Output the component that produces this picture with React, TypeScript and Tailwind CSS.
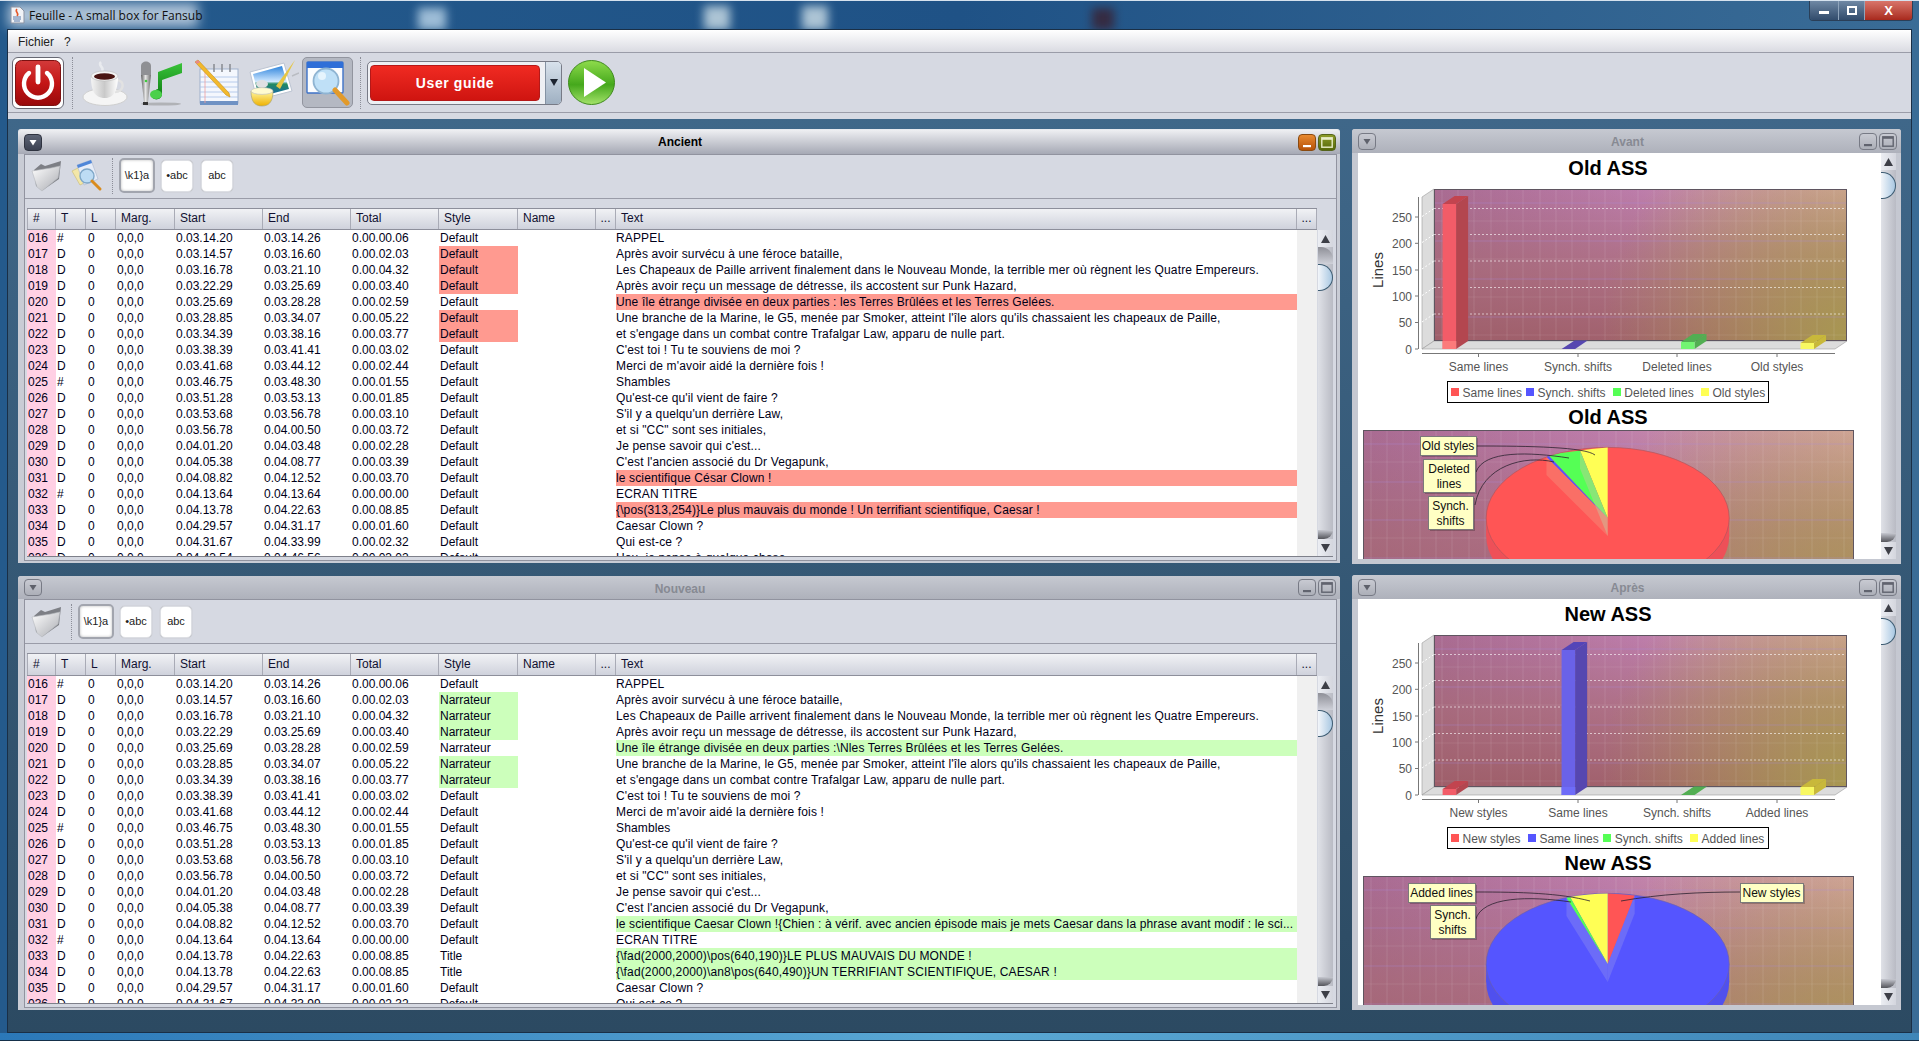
import React from "react";

type Row = { n: string; t: string; s: string; e: string; d: string; st: string; tx: string; hs?: boolean; ht?: boolean };
const r = (n: string, t: string, s: string, e: string, d: string, st: string, tx: string, hs = false, ht = false): Row => ({ n, t, s, e, d, st, tx, hs, ht });

const shared1 = (st: string, t20: string): Row[] => [
  r("016", "#", "0.03.14.20", "0.03.14.26", "0.00.00.06", "Default", "RAPPEL"),
  r("017", "D", "0.03.14.57", "0.03.16.60", "0.00.02.03", st, "Après avoir survécu à une féroce bataille,", true),
  r("018", "D", "0.03.16.78", "0.03.21.10", "0.00.04.32", st, "Les Chapeaux de Paille arrivent finalement dans le Nouveau Monde, la terrible mer où règnent les Quatre Empereurs.", true),
  r("019", "D", "0.03.22.29", "0.03.25.69", "0.00.03.40", st, "Après avoir reçu un message de détresse, ils accostent sur Punk Hazard,", true),
  r("020", "D", "0.03.25.69", "0.03.28.28", "0.00.02.59", st, t20, false, true),
  r("021", "D", "0.03.28.85", "0.03.34.07", "0.00.05.22", st, "Une branche de la Marine, le G5, menée par Smoker, atteint l'île alors qu'ils chassaient les chapeaux de Paille,", true),
  r("022", "D", "0.03.34.39", "0.03.38.16", "0.00.03.77", st, "et s'engage dans un combat contre Trafalgar Law, apparu de nulle part.", true),
  r("023", "D", "0.03.38.39", "0.03.41.41", "0.00.03.02", "Default", "C'est toi ! Tu te souviens de moi ?"),
  r("024", "D", "0.03.41.68", "0.03.44.12", "0.00.02.44", "Default", "Merci de m'avoir aidé la dernière fois !"),
  r("025", "#", "0.03.46.75", "0.03.48.30", "0.00.01.55", "Default", "Shambles"),
  r("026", "D", "0.03.51.28", "0.03.53.13", "0.00.01.85", "Default", "Qu'est-ce qu'il vient de faire ?"),
  r("027", "D", "0.03.53.68", "0.03.56.78", "0.00.03.10", "Default", "S'il y a quelqu'un derrière Law,"),
  r("028", "D", "0.03.56.78", "0.04.00.50", "0.00.03.72", "Default", "et si \"CC\" sont ses initiales,"),
  r("029", "D", "0.04.01.20", "0.04.03.48", "0.00.02.28", "Default", "Je pense savoir qui c'est..."),
  r("030", "D", "0.04.05.38", "0.04.08.77", "0.00.03.39", "Default", "C'est l'ancien associé du Dr Vegapunk,"),
];

const oldRows: Row[] = [
  ...shared1("Default", "Une île étrange divisée en deux parties : les Terres Brûlées et les Terres Gelées."),
  r("031", "D", "0.04.08.82", "0.04.12.52", "0.00.03.70", "Default", "le scientifique César Clown !", false, true),
  r("032", "#", "0.04.13.64", "0.04.13.64", "0.00.00.00", "Default", "ECRAN TITRE"),
  r("033", "D", "0.04.13.78", "0.04.22.63", "0.00.08.85", "Default", "{\\pos(313,254)}Le plus mauvais du monde ! Un terrifiant scientifique, Caesar !", false, true),
  r("034", "D", "0.04.29.57", "0.04.31.17", "0.00.01.60", "Default", "Caesar Clown ?"),
  r("035", "D", "0.04.31.67", "0.04.33.99", "0.00.02.32", "Default", "Qui est-ce ?"),
  r("036", "D", "0.04.43.54", "0.04.46.56", "0.00.03.02", "Default", "Hou, je pense à quelque chose"),
];

const newRows: Row[] = [
  ...shared1("Narrateur", "Une île étrange divisée en deux parties :\\Nles Terres Brûlées et les Terres Gelées."),
  r("031", "D", "0.04.08.82", "0.04.12.52", "0.00.03.70", "Default", "le scientifique Caesar Clown !{Chien : à vérif. avec ancien épisode mais je mets Caesar dans la phrase avant modif : le sci...", false, true),
  r("032", "#", "0.04.13.64", "0.04.13.64", "0.00.00.00", "Default", "ECRAN TITRE"),
  r("033", "D", "0.04.13.78", "0.04.22.63", "0.00.08.85", "Title", "{\\fad(2000,2000)\\pos(640,190)}LE PLUS MAUVAIS DU MONDE !", false, true),
  r("034", "D", "0.04.13.78", "0.04.22.63", "0.00.08.85", "Title", "{\\fad(2000,2000)\\an8\\pos(640,490)}UN TERRIFIANT SCIENTIFIQUE, CAESAR !", false, true),
  r("035", "D", "0.04.29.57", "0.04.31.17", "0.00.01.60", "Default", "Caesar Clown ?"),
  r("036", "D", "0.04.31.67", "0.04.33.99", "0.00.02.32", "Default", "Qui est-ce ?"),
];

const COLS = "grid grid-cols-[29px_30px_30px_59px_88px_88px_88px_79px_78px_20px_681px_20px]";
const HEAD = ["#", "T", "L", "Marg.", "Start", "End", "Total", "Style", "Name", "...", "Text", "..."];

function HeaderRow({ tall }: { tall: boolean }) {
  return (
    <div className={`${COLS} ${tall ? "h-[22px] leading-[18px]" : "h-[23px] leading-[20px]"} border-y border-[#8d8f9b] bg-gradient-to-b from-[#f1f2f5] to-[#cfd2dc] text-[12px] text-[#101030]`}>
      {HEAD.map((h, i) => (
        <div key={i} className={`border-r border-[#a9abb6] ${h === "..." ? "text-center" : "pl-[5px]"} ${i === 0 ? "border-l" : ""}`}>{h}</div>
      ))}
    </div>
  );
}

function TableBody({ rows, color }: { rows: Row[]; color: "red" | "green" }) {
  const hl = color === "red" ? "bg-[#ff9a90]" : "bg-[#ccffbb]";
  return (
    <div className="flex-1 overflow-hidden bg-white text-[12px] leading-[16px] text-[#000018]">
      {rows.map((x) => (
        <div key={x.n + x.tx} className={`${COLS} h-[16px] whitespace-nowrap`}>
          <div className="bg-[#ffd0e4] pl-[1px]">{x.n}</div>
          <div className="pl-[1px]">{x.t}</div>
          <div className="pl-[2px]">0</div>
          <div className="pl-[1px]">0,0,0</div>
          <div className="pl-[1px]">{x.s}</div>
          <div className="pl-[1px]">{x.e}</div>
          <div className="pl-[1px]">{x.d}</div>
          <div className={`pl-[1px] ${x.hs ? hl : ""}`}>{x.st}</div>
          <div />
          <div />
          <div className={`overflow-hidden tracking-[0.14px] ${x.ht ? hl : ""}`}>{x.tx}</div>
          <div className="bg-[#f0f0f0]" />
        </div>
      ))}
    </div>
  );
}

function Tri({ up }: { up: boolean }) {
  return (
    <svg width="9" height="8" viewBox="0 0 9 8" aria-hidden="true">
      <path d={up ? "M4.5 0 L9 8 L0 8 Z" : "M0 0 L9 0 L4.5 8 Z"} fill="#3d3f47" />
    </svg>
  );
}

function ScrollBar({ spacer }: { spacer: boolean }) {
  return (
    <div className="flex w-[15px] flex-col bg-gradient-to-r from-[#dfe1e7] to-[#b9bbc4]">
      <div className="flex h-[17px] items-center justify-center bg-gradient-to-r from-[#eceef3] to-[#d4d6de]"><Tri up /></div>
      {spacer ? <div className="h-[17px] rounded-tr-[12px] bg-gradient-to-b from-[#8f9098] to-[#cfd1d9]" /> : <div className="h-[2px]" />}
      <div className="h-[27px] rounded-r-full border border-l-0 border-[#3e5d73] bg-gradient-to-r from-[#f3f6fa] to-[#a9c8e2]" />
      <div className="flex-1" />
      <div className="h-[9px] rounded-br-[10px] bg-gradient-to-b from-[#c7c9d1] to-[#55565c]" />
      <div className="flex h-[17px] items-center justify-center bg-gradient-to-r from-[#eceef3] to-[#d4d6de]"><Tri up={false} /></div>
    </div>
  );
}

function MiniBtn({ kind, active }: { kind: "menu" | "min" | "max"; active: boolean }) {
  const bg = kind === "menu"
    ? (active ? "bg-gradient-to-b from-[#5d6475] to-[#3c4252] border-[#2f3340]" : "bg-gradient-to-b from-[#c8cad2] to-[#acafb8] border-[#777a85]")
    : kind === "min"
      ? (active ? "bg-gradient-to-b from-[#e98a2f] to-[#b65206] border-[#8a4a10]" : "bg-gradient-to-b from-[#c8cad2] to-[#acafb8] border-[#777a85]")
      : (active ? "bg-gradient-to-b from-[#8d9c28] to-[#566808] border-[#55641a]" : "bg-gradient-to-b from-[#c8cad2] to-[#acafb8] border-[#777a85]");
  const ink = active ? "#ffffff" : "#60636e";
  return (
    <div className={`flex h-[17px] w-[18px] items-center justify-center rounded-[4px] border ${bg}`}>
      <svg width="14" height="13" viewBox="0 0 14 13" aria-hidden="true">
        {kind === "menu" && <path d="M3.5 4 L10.5 4 L7 9.5 Z" fill={active ? "#ffffff" : "#5e616b"} />}
        {kind === "min" && <rect x="3" y="9" width="8" height="2.2" fill={ink} />}
        {kind === "max" && <rect x="1.8" y="1.8" width="10.4" height="9.4" fill="none" stroke={active ? "#e9edc8" : "#60636e"} strokeWidth="1.4" />}
        {kind === "max" && <rect x="2" y="2" width="10" height="1.8" fill={active ? "#e9edc8" : "#60636e"} />}
      </svg>
    </div>
  );
}

function PanelTitle({ title, active, h }: { title: string; active: boolean; h: string }) {
  return (
    <div className={`grid grid-cols-[1fr_auto_1fr] items-center ${h} rounded-t-[3px] ${active ? "bg-gradient-to-b from-[#eeeff2] to-[#a6a9b5]" : "bg-gradient-to-b from-[#c6c9d1] to-[#aeb1bb]"} pl-[6px] pr-[4px]`}>
      <div className="flex"><MiniBtn kind="menu" active={active} /></div>
      <div className={`text-[12px] font-bold ${active ? "text-black" : "pt-[2px] text-[#878a93]"}`}>{title}</div>
      <div className="flex justify-end gap-[2px]"><MiniBtn kind="min" active={active} /><MiniBtn kind="max" active={active} /></div>
    </div>
  );
}

function Toggle({ label, on, ml }: { label: string; on?: boolean; ml: string }) {
  return (
    <div className={`${ml} flex items-center justify-center rounded-[5px] bg-white text-[11px] text-[#222] ${on ? "h-[35px] w-[36px] border-2 border-[#a2a5ae] shadow-[inset_0_0_3px_#bbb]" : "h-[32px] w-[32px] border border-[#dddfe4] shadow-[0_0_1px_#aaa]"}`}>{label}</div>
  );
}

function FolderIcon() {
  return (
    <svg width="31" height="32" viewBox="0 0 31 32" aria-hidden="true">
      <defs><linearGradient id="fold" x1="0" y1="0" x2="1" y2="1"><stop offset="0" stopColor="#ffffff" /><stop offset="1" stopColor="#a9abb1" /></linearGradient></defs>
      <path d="M3 10 L10 4 L14 6 L30 1 L28 19 L12 30 L5 26 Z" fill="#7d7f85" />
      <path d="M1 11 L20 8 L29 6 L27 18 L11 31 L6 27 Z" fill="url(#fold)" stroke="#b6b8be" strokeWidth="0.6" />
    </svg>
  );
}

function SearchDoc() {
  return (
    <svg width="32" height="34" viewBox="0 0 32 34" aria-hidden="true">
      <path d="M1 12 L9 26 L17 22 L9 8 Z" fill="#f3e7a8" stroke="#c9bb70" strokeWidth="0.6" />
      <path d="M6 6 L20 1 L27 20 L13 26 Z" fill="#e7edf8" stroke="#aab6cc" strokeWidth="0.6" />
      <path d="M6 6 L20 1 L21 4 L7 9 Z" fill="#4f86d8" />
      <circle cx="16" cy="17" r="7" fill="#bddcf4" stroke="#7fa7c8" strokeWidth="1.4" />
      <path d="M21 22 L29 30" stroke="#d98b1d" strokeWidth="3" strokeLinecap="round" />
    </svg>
  );
}

function Panel({ title, active, rows, color, search, first }: { title: string; active: boolean; rows: Row[]; color: "red" | "green"; search: boolean; first: boolean }) {
  return (
    <div className={`flex h-[434px] w-[1322px] flex-col rounded-t-[3px] bg-[#c9ccd5] ${active ? "border-t border-[#e8e9ee]" : ""}`}>
      <PanelTitle title={title} active={active} h={first ? "h-[24px]" : "h-[23px]"} />
      <div className="ml-[6px] mr-[3px] flex flex-1 flex-col overflow-hidden border border-[#91939f] bg-[#d6d9e2]">
        <div className={`flex h-[44px] shrink-0 items-center border-b border-[#9a9ca8] ${first ? "pb-[2px]" : ""}`}>
          <div className="ml-[6px] flex"><FolderIcon /></div>
          {search && <div className="ml-[9px] flex"><SearchDoc /></div>}
          <div className="ml-[9px] h-[36px] border-l border-dotted border-[#8c8e98]" />
          <Toggle label="\k1}a" on ml="ml-[6px]" />
          <Toggle label="•abc" ml="ml-[6px]" />
          <Toggle label="abc" ml="ml-[8px]" />
        </div>
        <div className="ml-[2px] mr-[3px] mt-[9px] flex flex-1 flex-col overflow-hidden">
          <div className="flex">
            <div className="w-[1290px]"><HeaderRow tall={first} /></div>
          </div>
          <div className="flex min-h-0 flex-1 gap-[1px] border-b border-[#7e808a]">
            <div className="flex w-[1290px] overflow-hidden"><TableBody rows={rows} color={color} /></div>
            <ScrollBar spacer />
          </div>
        </div>
        <div className="h-[3px] shrink-0" />
      </div>
      <div className="h-[2px] shrink-0" />
    </div>
  );
}

const F = "Liberation Sans, Arial, sans-serif";

function PlotDefs({ id, x, y, w, h }: { id: string; x: number; y: number; w: number; h: number }) {
  return (
    <defs>
      <linearGradient id={`${id}h`} gradientUnits="userSpaceOnUse" x1={x} y1={y} x2={x + w} y2={y}>
        <stop offset="0" stopColor="#a96b92" />
        <stop offset="0.5" stopColor="#bd7dab" />
        <stop offset="1" stopColor="#dca8ac" />
      </linearGradient>
      <linearGradient id={`${id}v`} gradientUnits="userSpaceOnUse" x1={x} y1={y} x2={x} y2={y + h}>
        <stop offset="0" stopColor="#a0686c" stopOpacity="0" />
        <stop offset="0.5" stopColor="#a5686e" stopOpacity="0.6" />
        <stop offset="1" stopColor="#9c5c62" stopOpacity="0.85" />
      </linearGradient>
      <radialGradient id={`${id}r`} gradientUnits="userSpaceOnUse" cx={x + w} cy={y + h} r={w * 0.6}>
        <stop offset="0" stopColor="#a89a50" stopOpacity="0.95" />
        <stop offset="1" stopColor="#a89a50" stopOpacity="0" />
      </radialGradient>
      <pattern id={`${id}p`} patternUnits="userSpaceOnUse" x={x} y={y} width="49" height="38">
        <path d="M8 0V38M24 0V38M40 0V38" stroke="#ffffff" strokeOpacity="0.05" strokeWidth="2" />
        <path d="M0 14H49" stroke="#a88ae0" strokeOpacity="0.16" strokeWidth="2" />
        <path d="M0 32H49" stroke="#ffffff" strokeOpacity="0.04" strokeWidth="2" />
      </pattern>
    </defs>
  );
}

function PlotBg({ id, x, y, w, h }: { id: string; x: number; y: number; w: number; h: number }) {
  return (
    <g>
      <rect x={x} y={y} width={w} height={h} fill={`url(#${id}h)`} />
      <rect x={x} y={y} width={w} height={h} fill={`url(#${id}v)`} />
      <rect x={x} y={y} width={w} height={h} fill={`url(#${id}r)`} />
      <rect x={x} y={y} width={w} height={h} fill={`url(#${id}p)`} />
      <rect x={x + 0.5} y={y + 0.5} width={w - 1} height={h - 1} fill="none" stroke="#5f5560" />
    </g>
  );
}

const COL = {
  red: { f: "#f25c68", s: "#b3464f", t: "#c2444f", fl: "#fb7b7b" },
  blue: { f: "#6a62e8", s: "#5647b0", t: "#5445b8", fl: "#6e6cf8" },
  green: { f: "#72f472", s: "#52ae52", t: "#52ae52", fl: "#72f472" },
  yellow: { f: "#f8f862", s: "#c8b83a", t: "#c8b83a", fl: "#f8f862" },
};

function Bar({ x, top, c }: { x: number; top: number; c: keyof typeof COL }) {
  const k = COL[c];
  const w = 13.5;
  const b = 349;
  if (top >= b) return <path d={`M${x} ${b} L${x + 13} ${b - 8.5} L${x + 26} ${b - 8.5} L${x + w} ${b} Z`} fill={k.s} />;
  return (
    <g>
      <path d={`M${x + w} ${top} L${x + w + 12} ${top - 8} L${x + w + 12} ${b - 8} L${x + w} ${b} Z`} fill={k.s} />
      <path d={`M${x} ${top} L${x + 12} ${top - 8} L${x + w + 12} ${top - 8} L${x + w} ${top} Z`} fill={k.t} />
      <rect x={x} y={top} width={w} height={b - top} fill={k.f} />
      {b - top > 10 && <rect x={x} y={b - 8} width={w} height={8} fill={k.fl} />}
    </g>
  );
}

function Chart({ id, title, labels, legend, bars, pie }: {
  id: string; title: string; labels: string[];
  legend: { sq: number; tx: number; c: string; l: string }[];
  bars: { x: number; top: number; c: keyof typeof COL }[];
  pie: React.ReactNode;
}) {
  const ticks: [string, number][] = [["250", 217], ["200", 243.3], ["150", 270], ["100", 296], ["50", 322.5], ["0", 349]];
  const gl = [208.5, 234.5, 261, 287.5, 314];
  const tx = [1478.5, 1578, 1677, 1777];
  return (
    <svg width="523" height="406" viewBox="1358 153 523 406" className="block" fontFamily={F}>
      <PlotDefs id={`${id}a`} x={1434} y={189} w={413} h={152} />
      <PlotDefs id={`${id}b`} x={1363} y={430} w={491} h={215} />
      <text x="1608" y="175" textAnchor="middle" fontSize="20" fontWeight="700" fill="#000">{title}</text>
      <path d="M1422 197 L1434 189 L1434 341 L1422 349 Z" fill="#dcdcdc" stroke="#9a9a9a" strokeWidth="0.6" />
      <path d="M1422 349 L1434 341 L1847 341 L1835 349 Z" fill="#dcdcdc" stroke="#9a9a9a" strokeWidth="0.6" />
      <PlotBg id={`${id}a`} x={1434} y={189} w={413} h={152} />
      {gl.map((y) => (
        <g key={y}>
          <line x1="1434" x2="1846" y1={y} y2={y} stroke="#ffffff" strokeOpacity="0.6" strokeDasharray="2 2" />
          <line x1="1422" x2="1434" y1={y + 8} y2={y} stroke="#ffffff" strokeDasharray="2 2" />
        </g>
      ))}
      <line x1="1418.5" x2="1418.5" y1="197" y2="349" stroke="#777" />
      {ticks.map(([t, y]) => (
        <g key={t}>
          <line x1="1415" x2="1418" y1={y} y2={y} stroke="#777" />
          <text x="1412" y={y + 4.5} textAnchor="end" fontSize="12" fill="#555">{t}</text>
        </g>
      ))}
      <text x="0" y="0" fontSize="15" fill="#333" textAnchor="middle" transform="translate(1383 270) rotate(-90)">Lines</text>
      <line x1="1422" x2="1835" y1="353.5" y2="353.5" stroke="#777" />
      {tx.map((x, i) => (
        <g key={x}>
          <line x1={x} x2={x} y1="354" y2="357" stroke="#777" />
          <text x={x} y="371" textAnchor="middle" fontSize="12" fill="#555">{labels[i]}</text>
        </g>
      ))}
      {bars.map((b, i) => <Bar key={i} {...b} />)}
      <rect x="1447.5" y="381.5" width="321" height="21" fill="#fff" stroke="#000" />
      {legend.map((l) => (
        <g key={l.l}>
          <rect x={l.sq} y="388" width="8" height="8" fill={l.c} />
          <text x={l.tx} y="396.5" fontSize="12" fill="#555">{l.l}</text>
        </g>
      ))}
      <text x="1608" y="424" textAnchor="middle" fontSize="20" fontWeight="700" fill="#000">{title}</text>
      <PlotBg id={`${id}b`} x={1363} y={430} w={491} h={215} />
      {pie}
    </svg>
  );
}

function Callout({ x, y, w, h, lines }: { x: number; y: number; w: number; h: number; lines: string[] }) {
  const lh = lines.length > 1 ? 15 : 0;
  return (
    <g>
      <rect x={x + 2} y={y + 2} width={w} height={h} fill="#000" fillOpacity="0.22" />
      <rect x={x + 0.5} y={y + 0.5} width={w} height={h} fill="#ffffc4" stroke="#7a7a7a" />
      {lines.map((l, i) => (
        <text key={l} x={x + w / 2} y={y + h / 2 + 4.5 - (lines.length - 1) * lh / 2 + i * lh} textAnchor="middle" fontSize="12" fill="#111">{l}</text>
      ))}
    </g>
  );
}

const CX = 1607.7;
const RX = 121.5;
const RY = 70.6;
const DEPTH = 18;

function Wedge({ cy, a, b, fill }: { cy: number; a: [number, number]; b: [number, number]; fill: string }) {
  return <path d={`M${CX} ${cy} L${a[0]} ${a[1]} A${RX} ${RY} 0 0 0 ${b[0]} ${b[1]} Z`} fill={fill} />;
}

function Side({ c, p, fill }: { c: [number, number]; p: [number, number]; fill: string }) {
  return <path d={`M${c[0]} ${c[1]} L${p[0]} ${p[1]} L${p[0]} ${p[1] + DEPTH} L${c[0]} ${c[1] + DEPTH} Z`} fill={fill} fillOpacity="0.45" />;
}

function OldPie() {
  const cy = 518;
  const top: [number, number] = [CX, cy - RY];
  const y1: [number, number] = [1580, 450.6];
  const g1: [number, number] = [1549, 456];
  const b1: [number, number] = [1546.5, 457];
  return (
    <g>
      <ellipse cx={CX} cy={cy + DEPTH} rx={RX} ry={RY} fill="#ee5058" />
      <rect x={CX - RX} y={cy} width={RX * 2} height={DEPTH} fill="#ee5058" />
      <ellipse cx={CX} cy={cy} rx={RX} ry={RY} fill="#ff5555" stroke="#b3545c" strokeWidth="0.7" />
      <Wedge cy={cy} a={top} b={y1} fill="#ffff55" />
      <Wedge cy={cy} a={y1} b={g1} fill="#55ff55" />
      <Wedge cy={cy} a={g1} b={b1} fill="#5555ff" />
      <Side c={[CX, cy]} p={b1} fill="#f4907c" />
      <Side c={[CX, cy]} p={y1} fill="#c8c8a0" />
      <path d="M1477 446 C1530 446 1585 447 1595 455 M1476 472 C1484 450 1530 452 1569 458 M1475 505 C1482 465 1525 455 1554 462" fill="none" stroke="#2b2230" strokeWidth="0.8" />
      <Callout x={1420} y={436} w={56} h={19} lines={["Old styles"]} />
      <Callout x={1423} y={459} w={52} h={33} lines={["Deleted", "lines"]} />
      <Callout x={1428} y={496} w={45} h={33} lines={["Synch.", "shifts"]} />
    </g>
  );
}

function NewPie() {
  const cy = 518;
  const top: [number, number] = [CX, cy - RY];
  const r1: [number, number] = [1634.7, 449.6];
  const y1: [number, number] = [1570, 451];
  const g1: [number, number] = [1566.5, 452];
  return (
    <g>
      <ellipse cx={CX} cy={cy + DEPTH} rx={RX} ry={RY} fill="#5050ee" />
      <rect x={CX - RX} y={cy} width={RX * 2} height={DEPTH} fill="#5050ee" />
      <ellipse cx={CX} cy={cy} rx={RX} ry={RY} fill="#5555ff" stroke="#6a5fb0" strokeWidth="0.7" />
      <path d={`M${CX} ${cy} L${r1[0]} ${r1[1]} A${RX} ${RY} 0 0 0 ${top[0]} ${top[1]} Z`} fill="#ff5555" />
      <Wedge cy={cy} a={top} b={y1} fill="#ffff55" />
      <Wedge cy={cy} a={y1} b={g1} fill="#55ff55" />
      <Side c={[CX, cy]} p={g1} fill="#8a8af0" />
      <Side c={[CX, cy]} p={r1} fill="#8a8af0" />
      <path d="M1476 446 C1520 446 1560 447 1590 455 M1475.5 474 C1482 450 1530 450 1571 456 M1740 446 C1700 446 1660 448 1621 455" fill="none" stroke="#2b2230" strokeWidth="0.8" />
      <Callout x={1408} y={437} w={67} h={19} lines={["Added lines"]} />
      <Callout x={1430} y={459} w={45} h={33} lines={["Synch.", "shifts"]} />
      <Callout x={1740} y={437} w={63} h={19} lines={["New styles"]} />
    </g>
  );
}

function ChartPanel({ title, children }: { title: string; children: React.ReactNode }) {
  return (
    <div className="flex h-[435px] w-[549px] flex-col rounded-t-[3px] bg-[#c5c8d1]">
      <PanelTitle title={title} active={false} h="h-[24px]" />
      <div className="ml-[6px] mr-[5px] flex h-[406px] bg-white">
        <div className="h-[406px] w-[523px] overflow-hidden">{children}</div>
        <ScrollBar spacer={false} />
      </div>
    </div>
  );
}

function ToolIconCoffee() {
  return (
    <svg width="46" height="46" viewBox="0 0 46 46" aria-hidden="true">
      <defs><linearGradient id="cup" x1="0" x2="1"><stop offset="0" stopColor="#f4f4f4" /><stop offset="0.5" stopColor="#c9c9c9" /><stop offset="1" stopColor="#ffffff" /></linearGradient></defs>
      <path d="M19 2 C15 6 23 7 20 11" fill="none" stroke="#e9ebef" strokeWidth="2.5" />
      <ellipse cx="23" cy="37" rx="22" ry="8.5" fill="#f5f5f5" stroke="#cfcfcf" />
      <path d="M34 20 C44 20 42 32 33 32" fill="none" stroke="#e2e2e2" strokeWidth="2.5" />
      <path d="M9 16 C9 28 11 38 23 38 C33 38 36 28 36 16 Z" fill="url(#cup)" />
      <ellipse cx="22.5" cy="16" rx="13.5" ry="5" fill="#f3f3f3" stroke="#b8b8b8" strokeWidth="0.6" />
      <ellipse cx="22.5" cy="16.5" rx="10.5" ry="3.2" fill="#4a1512" />
    </svg>
  );
}

function ToolIconMic() {
  return (
    <svg width="46" height="46" viewBox="0 0 46 46" aria-hidden="true">
      <defs>
        <linearGradient id="mic" x1="0" x2="1"><stop offset="0" stopColor="#5c5c5c" /><stop offset="0.45" stopColor="#e4e4e4" /><stop offset="1" stopColor="#6b6b6b" /></linearGradient>
        <linearGradient id="nt" x1="0" y1="0" x2="0" y2="1"><stop offset="0" stopColor="#39c339" /><stop offset="1" stopColor="#0c7a12" /></linearGradient>
      </defs>
      <ellipse cx="23" cy="44" rx="20" ry="1.6" fill="#b0b2b6" />
      <path d="M3 6 C3 0 13 0 13 6 L13 15 L3 15 Z" fill="#8f9094" />
      <path d="M3 15 L13 15 L10 42 L6 42 Z" fill="url(#mic)" />
      <rect x="5" y="42" width="5" height="3" fill="#333" />
      <circle cx="8" cy="21" r="1.3" fill="#3dcc3d" />
      <path d="M20 12 L44 3 L44 13 L24 20 L24 34 C24 41 13 41 14 35 C15 30 20 29 20 29 Z" fill="url(#nt)" />
      <ellipse cx="18" cy="34.5" rx="6" ry="4.5" fill="#4bd04b" />
    </svg>
  );
}

function ToolIconPad() {
  return (
    <svg width="48" height="48" viewBox="0 0 48 48" aria-hidden="true">
      <rect x="8" y="10" width="38" height="34" fill="#f4f7fd" stroke="#9fb1cc" />
      <rect x="8" y="42" width="38" height="4" fill="#6f92c4" />
      <path d="M8 18H46M8 23H46M8 28H46M8 33H46M8 38H46" stroke="#a8c0e6" strokeWidth="0.8" />
      <path d="M13 10V44" stroke="#f0a0a0" strokeWidth="0.8" />
      <path d="M22 5V13M30 5V13M38 5V13" stroke="#8c8f96" strokeWidth="1.6" />
      <path d="M3 3 L6 1 L37 34 L38 38 L34 36 Z" fill="#f2b92c" stroke="#c68d18" strokeWidth="0.6" />
      <path d="M3 3 L6 1 L8 3.2 L5 5 Z" fill="#e98888" />
    </svg>
  );
}

function ToolIconPaint() {
  return (
    <svg width="51" height="48" viewBox="0 0 51 48" aria-hidden="true">
      <defs>
        <linearGradient id="sky" x1="0" y1="0" x2="0" y2="1"><stop offset="0" stopColor="#2f84dc" /><stop offset="0.5" stopColor="#cfe8ff" /><stop offset="0.58" stopColor="#238a5f" /><stop offset="1" stopColor="#1360b8" /></linearGradient>
        <linearGradient id="jar" x1="0" y1="0" x2="0" y2="1"><stop offset="0" stopColor="#fff7a0" /><stop offset="1" stopColor="#eeb000" /></linearGradient>
      </defs>
      <path d="M2 13 L36 4 L44 32 L9 41 Z" fill="#ffffff" stroke="#bcc4d2" />
      <path d="M5 15 L34 7 L41 30 L11 38 Z" fill="url(#sky)" />
      <path d="M47 1 L32 30 L28 27 Z" fill="#e6c644" />
      <path d="M44 17 L51 14" stroke="#b9bcc2" strokeWidth="1.4" />
      <ellipse cx="14" cy="25" rx="6" ry="4" fill="#dfe0e2" />
      <path d="M3 32 C3 44 8 47 14 47 C20 47 25 44 25 32 Z" fill="url(#jar)" stroke="#a9a67a" strokeWidth="0.7" />
      <ellipse cx="14" cy="32" rx="11" ry="3.4" fill="#fffbd0" stroke="#bbb" strokeWidth="0.6" />
    </svg>
  );
}

function ToolIconSearch() {
  return (
    <svg width="46" height="46" viewBox="0 0 46 46" aria-hidden="true">
      <rect x="2" y="2" width="36" height="31" rx="1" fill="#fbfdff" stroke="#3e72c8" strokeWidth="1.4" />
      <rect x="2" y="2" width="36" height="6" fill="#2f6fd8" />
      <circle cx="21" cy="21" r="12.5" fill="#bfe0f7" stroke="#8fb4d2" strokeWidth="1.8" />
      <circle cx="17" cy="16" r="4" fill="#e6f4fd" />
      <path d="M30 30 L42 43" stroke="#e29a2a" strokeWidth="5" strokeLinecap="round" />
    </svg>
  );
}

function PowerBtn() {
  return (
    <div className="flex h-[52px] w-[52px] items-center justify-center rounded-[6px] border border-[#666873] bg-white">
      <svg width="46" height="46" viewBox="0 0 46 46" aria-hidden="true">
        <defs><linearGradient id="pwr" x1="0" y1="0" x2="0" y2="1"><stop offset="0" stopColor="#d33a3a" /><stop offset="0.5" stopColor="#c41616" /><stop offset="1" stopColor="#98090b" /></linearGradient></defs>
        <rect x="0.5" y="0.5" width="45" height="45" rx="6" fill="url(#pwr)" stroke="#7c1111" />
        <path d="M14 13 A14 14 0 1 0 32 13" fill="none" stroke="#ffffff" strokeWidth="4.4" strokeLinecap="round" />
        <path d="M23 7 V22" stroke="#ffffff" strokeWidth="4.8" strokeLinecap="round" />
      </svg>
    </div>
  );
}

function PlayBtn() {
  return (
    <svg width="47" height="45" viewBox="0 0 47 45" aria-hidden="true">
      <defs><linearGradient id="ply" x1="0" y1="0" x2="0" y2="1"><stop offset="0" stopColor="#8fdc4c" /><stop offset="0.55" stopColor="#45a81c" /><stop offset="1" stopColor="#a4e36a" /></linearGradient></defs>
      <ellipse cx="23.5" cy="22.5" rx="23" ry="22" fill="url(#ply)" stroke="#3f8a1d" />
      <path d="M16 8 L38 22.5 L16 37 Z" fill="#ffffff" />
    </svg>
  );
}

function WinIcon() {
  return (
    <svg width="15" height="18" viewBox="0 0 15 18" aria-hidden="true">
      <path d="M1 1 H10 L14 5 V17 H1 Z" fill="#f1f3f7" stroke="#8b93a3" />
      <path d="M7 3 C4 6 10 7 7 10" fill="none" stroke="#e2572b" strokeWidth="1.6" />
      <path d="M3 11 H11 M3 13 H11 M4 15 H10" stroke="#5878a8" strokeWidth="1" />
    </svg>
  );
}

const bars1 = [{ x: 1442.6, top: 204, c: "red" as const }, { x: 1561.6, top: 349, c: "blue" as const }, { x: 1681, top: 342, c: "green" as const }, { x: 1800.5, top: 343, c: "yellow" as const }];
const bars2 = [{ x: 1442.6, top: 343, c: "red" as const }, { x: 1561.6, top: 204, c: "blue" as const }, { x: 1681, top: 349, c: "green" as const }, { x: 1800.5, top: 341, c: "yellow" as const }];

export default function App() {
  return (
    <div className="relative flex h-[1041px] w-[1919px] flex-col overflow-hidden bg-gradient-to-r from-[#245a8c] via-[#1f5286] to-[#3a6c96] font-['Liberation_Sans',Arial,sans-serif]">
      {/* wallpaper seen through the glass title bar */}
      <div className="absolute left-[418px] top-[8px] h-[22px] w-[28px] bg-[#bcd6ea] opacity-80 blur-[5px]" />
      <div className="absolute left-[704px] top-[6px] h-[24px] w-[26px] bg-[#cfe0e8] opacity-80 blur-[5px]" />
      <div className="absolute left-[802px] top-[6px] h-[24px] w-[26px] bg-[#cfe0e8] opacity-80 blur-[5px]" />
      <div className="absolute left-[1092px] top-[8px] h-[22px] w-[22px] bg-[#3a2030] opacity-80 blur-[5px]" />
      <div className="absolute left-[8px] top-[3px] h-[24px] w-[190px] bg-[#cfdcea] opacity-80 blur-[6px]" />

      <div className="relative flex h-[29px] shrink-0 items-start justify-between border-t border-[#d6e2ee] pl-[10px] pr-[6px]">
        <div className="flex h-[28px] items-center gap-[4px]">
          <WinIcon />
          <span className="pt-[1px] font-['Open_Sans',sans-serif] text-[12px] text-[#101010]">Feuille - A small box for Fansub</span>
        </div>
        <div className="flex h-[20px] overflow-hidden rounded-b-[4px] border border-t-0 border-[#2a3f58]">
          <div className="flex w-[29px] items-center justify-center border-r border-[#8fa4bb] bg-gradient-to-b from-[#6f88a4] to-[#324c6c]"><div className="mt-[4px] h-[3px] w-[10px] bg-white" /></div>
          <div className="flex w-[26px] items-center justify-center border-r border-[#8fa4bb] bg-gradient-to-b from-[#6f88a4] to-[#324c6c]"><div className="h-[9px] w-[10px] border-2 border-white" /></div>
          <div className="flex w-[47px] items-center justify-center bg-gradient-to-b from-[#d8746a] to-[#a8281c] text-[13px] font-bold leading-none text-white">X</div>
        </div>
      </div>

      <div className="relative flex min-h-0 flex-1 px-[7px]">
        <div className="flex w-[1906px] flex-col border border-[#1a2f46] bg-[#d6d9e2]">
          <div className="flex h-[23px] shrink-0 items-center gap-[10px] border-b border-[#9a9ca8] bg-gradient-to-b from-[#ffffff] to-[#dadbe2] pl-[10px] pt-[2px] text-[12px] text-[#222]">
            <span>Fichier</span><span>?</span>
          </div>
          <div className="flex h-[60px] shrink-0 items-center border-b border-[#9a9ca8]">
            <div className="ml-[4px] flex"><PowerBtn /></div>
            <div className="ml-[8px] h-[52px] border-l border-dotted border-[#8c8e98]" />
            <div className="ml-[9px] flex"><ToolIconCoffee /></div>
            <div className="ml-[10px] flex"><ToolIconMic /></div>
            <div className="ml-[8px] flex"><ToolIconPad /></div>
            <div className="ml-[8px] flex"><ToolIconPaint /></div>
            <div className="ml-[3px] flex h-[51px] w-[51px] items-center justify-center rounded-[5px] border border-[#92959f] bg-[#b4b8c2]"><ToolIconSearch /></div>
            <div className="ml-[7px] h-[52px] border-l border-dotted border-[#8c8e98]" />
            <div className="ml-[6px] flex h-[44px] w-[195px] overflow-hidden rounded-[5px] border border-[#777a86] bg-[#eef0f4]">
              <div className="my-[3px] ml-[2px] flex w-[170px] items-center justify-center rounded-[4px] border border-[#b51818] bg-gradient-to-b from-[#f02a22] to-[#cf1410] pt-[2px] text-[14px] font-bold tracking-[0.6px] text-white">User guide</div>
              <div className="ml-auto flex w-[16px] items-center justify-center border-l border-[#8492a3] bg-gradient-to-b from-[#d8e2ec] to-[#9fb0c2]">
                <svg width="8" height="7" viewBox="0 0 8 7" aria-hidden="true"><path d="M0 0H8L4 7Z" fill="#1d2430" /></svg>
              </div>
            </div>
            <div className="ml-[6px] flex"><PlayBtn /></div>
          </div>
          <div className="h-[6px] shrink-0" />
          <div className="flex flex-1 gap-[12px] bg-gradient-to-b from-[#3f6789] to-[#2c4a62] pl-[10px] pt-[10px]">
            <div className="flex h-[881px] flex-col justify-between">
              <Panel title="Ancient" active rows={oldRows} color="red" search first />
              <Panel title="Nouveau" active={false} rows={newRows} color="green" search={false} first={false} />
            </div>
            <div className="flex h-[881px] flex-col justify-between">
              <ChartPanel title="Avant">
                <Chart id="o" title="Old ASS" labels={["Same lines", "Synch. shifts", "Deleted lines", "Old styles"]}
                  legend={[
                    { sq: 1451, tx: 1462.6, c: "#ff5555", l: "Same lines" },
                    { sq: 1526, tx: 1537.5, c: "#5555ff", l: "Synch. shifts" },
                    { sq: 1613, tx: 1624.3, c: "#55ff55", l: "Deleted lines" },
                    { sq: 1701, tx: 1712.5, c: "#ffff55", l: "Old styles" },
                  ]}
                  bars={bars1} pie={<OldPie />} />
              </ChartPanel>
              <ChartPanel title="Après">
                <Chart id="n" title="New ASS" labels={["New styles", "Same lines", "Synch. shifts", "Added lines"]}
                  legend={[
                    { sq: 1451, tx: 1462.6, c: "#ff5555", l: "New styles" },
                    { sq: 1528, tx: 1539.4, c: "#5555ff", l: "Same lines" },
                    { sq: 1603, tx: 1614.7, c: "#55ff55", l: "Synch. shifts" },
                    { sq: 1690, tx: 1701.6, c: "#ffff55", l: "Added lines" },
                  ]}
                  bars={bars2} pie={<NewPie />} />
              </ChartPanel>
            </div>
          </div>
        </div>
      </div>

      <div className="relative h-[8px] shrink-0 border-b border-[#15304a] bg-gradient-to-r from-[#2b78b8] via-[#5aa8d4] to-[#3f86b8]" />
    </div>
  );
}
